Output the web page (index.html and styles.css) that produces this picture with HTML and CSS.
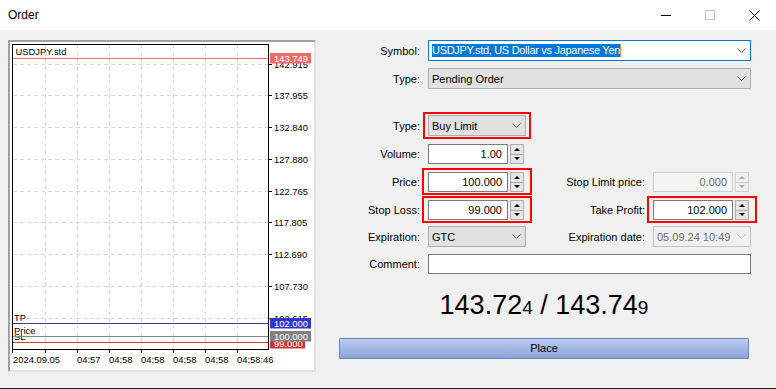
FILE: index.html
```html
<!DOCTYPE html>
<html>
<head>
  <meta charset="UTF-8">
  <title>Order</title>
  <link rel="stylesheet" href="styles.css">
</head>
<body>
  <div class="window">
    <div class="titlebar">
      <div class="title">Order</div>
      <div class="ctl">
        <svg width="10" height="10" viewBox="0 0 10 10"><line x1="0" y1="5.5" x2="10" y2="5.5" stroke="#000"/></svg>
      </div>
      <div class="ctl">
        <svg width="10" height="10" viewBox="0 0 10 10"><rect x="0.5" y="0.5" width="9" height="9" fill="none" stroke="#c6c6c6"/></svg>
      </div>
      <div class="ctl">
        <svg width="11" height="11" viewBox="0 0 11 11"><path d="M0.5 0.5 L10.5 10.5 M10.5 0.5 L0.5 10.5" stroke="#000" fill="none"/></svg>
      </div>
    </div>

    <div class="main">
      <div class="chart">
        <svg width="304" height="328" viewBox="10 42 304 328">
          <g class="grid">
            <line x1="13" y1="64.5" x2="268" y2="64.5"/>
            <line x1="13" y1="95.5" x2="268" y2="95.5"/>
            <line x1="13" y1="127.5" x2="268" y2="127.5"/>
            <line x1="13" y1="159.5" x2="268" y2="159.5"/>
            <line x1="13" y1="191.5" x2="268" y2="191.5"/>
            <line x1="13" y1="222.5" x2="268" y2="222.5"/>
            <line x1="13" y1="254.5" x2="268" y2="254.5"/>
            <line x1="13" y1="286.5" x2="268" y2="286.5"/>
            <line x1="13" y1="318.5" x2="268" y2="318.5"/>
            <line x1="45.5" y1="45" x2="45.5" y2="349"/>
            <line x1="77.5" y1="45" x2="77.5" y2="349"/>
            <line x1="109.5" y1="45" x2="109.5" y2="349"/>
            <line x1="141.5" y1="45" x2="141.5" y2="349"/>
            <line x1="173.5" y1="45" x2="173.5" y2="349"/>
            <line x1="205.5" y1="45" x2="205.5" y2="349"/>
            <line x1="237.5" y1="45" x2="237.5" y2="349"/>
          </g>

          <g class="ticks">
            <line x1="269" y1="64.5" x2="272" y2="64.5"/>
            <line x1="269" y1="95.5" x2="272" y2="95.5"/>
            <line x1="269" y1="127.5" x2="272" y2="127.5"/>
            <line x1="269" y1="159.5" x2="272" y2="159.5"/>
            <line x1="269" y1="191.5" x2="272" y2="191.5"/>
            <line x1="269" y1="222.5" x2="272" y2="222.5"/>
            <line x1="269" y1="254.5" x2="272" y2="254.5"/>
            <line x1="269" y1="286.5" x2="272" y2="286.5"/>
            <line x1="269" y1="318.5" x2="272" y2="318.5"/>
            <line x1="12.5" y1="350" x2="12.5" y2="353"/>
            <line x1="45.5" y1="350" x2="45.5" y2="353"/>
            <line x1="77.5" y1="350" x2="77.5" y2="353"/>
            <line x1="109.5" y1="350" x2="109.5" y2="353"/>
            <line x1="141.5" y1="350" x2="141.5" y2="353"/>
            <line x1="173.5" y1="350" x2="173.5" y2="353"/>
            <line x1="205.5" y1="350" x2="205.5" y2="353"/>
            <line x1="237.5" y1="350" x2="237.5" y2="353"/>
          </g>

          <g class="axis">
            <text x="274" y="67.8">142.915</text>
            <text x="274" y="98.8">137.955</text>
            <text x="274" y="130.8">132.840</text>
            <text x="274" y="162.8">127.880</text>
            <text x="274" y="194.8">122.765</text>
            <text x="274" y="225.8">117.805</text>
            <text x="274" y="257.8">112.690</text>
            <text x="274" y="289.8">107.730</text>
            <text x="274" y="321.8">102.615</text>
            <text x="13" y="363">2024.09.05</text>
            <text x="77" y="363">04:57</text>
            <text x="109" y="363">04:58</text>
            <text x="141" y="363">04:58</text>
            <text x="173" y="363">04:58</text>
            <text x="205" y="363">04:58</text>
            <text x="237" y="363">04:58:46</text>
            <text x="15.5" y="55">USDJPY.std</text>
            <text x="14" y="321">TP</text>
            <text x="14" y="340">SL</text>
            <text x="14" y="334">Price</text>
          </g>

          <line x1="13" y1="58.5" x2="268" y2="58.5" stroke="#ee6a6a"/>
          <line x1="13" y1="323.5" x2="268" y2="323.5" stroke="#3a3a9e"/>
          <line x1="13" y1="336.5" x2="268" y2="336.5" stroke="#858585"/>
          <line x1="13" y1="342.5" x2="268" y2="342.5" stroke="#d33a3a"/>

          <rect x="12.5" y="44.5" width="256" height="305" fill="none" stroke="#000"/>

          <g class="tags">
            <rect x="270" y="53" width="41" height="10.5" fill="#f06a6a"/>
            <text x="274" y="61.7">143.749</text>
            <rect x="270" y="318" width="41" height="10.5" fill="#3434c6"/>
            <text x="274" y="326.6">102.000</text>
            <rect x="270" y="338" width="35" height="10.5" fill="#cc3434"/>
            <text x="274" y="346.8">99.000</text>
            <rect x="270" y="331" width="41" height="10.5" fill="#808080"/>
            <text x="274" y="339.6">100.000</text>
          </g>
        </svg>
      </div>

      <div class="form">
        <div class="row tall">
          <label>Symbol:</label>
          <div class="combo focus span3">
            <span class="sel">USDJPY.std, US Dollar vs Japanese Yen</span>
            <svg class="chev" width="9" height="5" viewBox="0 0 9 5"><polyline points="0.5,0.5 4.5,4.5 8.5,0.5"/></svg>
          </div>
        </div>

        <div class="row tall mt7">
          <label>Type:</label>
          <div class="combo span3">
            <span>Pending Order</span>
            <svg class="chev" width="9" height="5" viewBox="0 0 9 5"><polyline points="0.5,0.5 4.5,4.5 8.5,0.5"/></svg>
          </div>
        </div>

        <div class="row tall mt26">
          <label>Type:</label>
          <div class="combo hl">
            <span>Buy Limit</span>
            <svg class="chev" width="9" height="5" viewBox="0 0 9 5"><polyline points="0.5,0.5 4.5,4.5 8.5,0.5"/></svg>
          </div>
        </div>

        <div class="row mt8">
          <label>Volume:</label>
          <div class="field">
            <div class="input">1.00</div>
            <div class="spin"><i class="up"></i><i class="dn"></i></div>
          </div>
        </div>

        <div class="row mt8">
          <label>Price:</label>
          <div class="field hl hl-in">
            <div class="input">100.000</div>
            <div class="spin"><i class="up"></i><i class="dn"></i></div>
          </div>
          <label>Stop Limit price:</label>
          <div class="field off">
            <div class="input">0.000</div>
            <div class="spin"><i class="up"></i><i class="dn"></i></div>
          </div>
        </div>

        <div class="row mt8">
          <label>Stop Loss:</label>
          <div class="field hl hl-in">
            <div class="input">99.000</div>
            <div class="spin"><i class="up"></i><i class="dn"></i></div>
          </div>
          <label>Take Profit:</label>
          <div class="field hl hl-in">
            <div class="input">102.000</div>
            <div class="spin"><i class="up"></i><i class="dn"></i></div>
          </div>
        </div>

        <div class="row tall mt6">
          <label>Expiration:</label>
          <div class="combo">
            <span>GTC</span>
            <svg class="chev" width="9" height="5" viewBox="0 0 9 5"><polyline points="0.5,0.5 4.5,4.5 8.5,0.5"/></svg>
          </div>
          <label>Expiration date:</label>
          <div class="combo off">
            <span>05.09.24 10:49</span>
            <svg class="chev" width="9" height="5" viewBox="0 0 9 5"><polyline points="0.5,0.5 4.5,4.5 8.5,0.5"/></svg>
          </div>
        </div>

        <div class="row mt7">
          <label>Comment:</label>
          <div class="input span3"></div>
        </div>

        <div class="quote">143.72<small>4</small> / 143.74<small>9</small></div>

        <div class="place">Place</div>
      </div>
    </div>
  </div>
</body>
</html>
```

FILE: styles.css
```css
body {
  margin: 0;
  background: #1e1e1e;
  font: 11px "Liberation Sans", Arial, sans-serif;
  color: #000;
}
.window {
  width: 776px;
  height: 388px;
  background: #f0f0f0;
  overflow: hidden;
}

/* title bar */
.titlebar {
  height: 30px;
  background: #fff;
  display: flex;
  align-items: center;
}
.title {
  flex: 1;
  padding-left: 8px;
  font-size: 12px;
}
.ctl {
  width: 44px;
  height: 30px;
  display: flex;
  align-items: center;
  justify-content: center;
}
.ctl svg {
  display: block;
}

.main {
  display: flex;
  padding: 10px 0 0 8px;
}

/* chart */
.chart {
  width: 304px;
  height: 328px;
  border: 2px solid;
  border-color: #a0a0a0 #e3e3e3 #e3e3e3 #a0a0a0;
  background: #fff;
}
.chart svg {
  display: block;
}
.grid line {
  stroke: #d9d9d9;
  stroke-dasharray: 4 3;
}
.ticks line {
  stroke: #000;
}
.chart text {
  font: 9.4px "Liberation Sans", Arial, sans-serif;
  fill: #000;
}
.tags text {
  fill: #fff;
}

/* form */
.form {
  margin-left: 14px;
  width: 421px;
}
.row {
  display: grid;
  grid-template-columns: 90px 98px 111px 98px;
  column-gap: 8px;
  align-items: center;
  height: 20px;
}
.row.tall {
  height: 21px;
}
.mt6 { margin-top: 6px; }
.mt7 { margin-top: 7px; }
.mt8 { margin-top: 8px; }
.mt26 { margin-top: 26px; }
.row label {
  text-align: right;
  white-space: nowrap;
}
.span3 {
  grid-column: 2 / 5;
}

.combo {
  position: relative;
  height: 21px;
  box-sizing: border-box;
  border: 1px solid #adadad;
  background: #e1e1e1;
  display: flex;
  align-items: center;
  justify-content: space-between;
  padding: 0 4px 0 3px;
}
.combo.focus {
  border-color: #0078d7;
  background: #fff;
}
.combo .sel {
  background: #0078d7;
  color: #fff;
  line-height: 13px;
  letter-spacing: -0.3px;
  border-right: 1px solid #f08a24;
}
.chev polyline {
  fill: none;
  stroke: #505050;
}
.combo.off {
  background: #f0f0f0;
  border-color: #c4c4c4;
  color: #6d6d6d;
}
.combo.off .chev polyline {
  stroke: #c0c0c0;
}

.field {
  position: relative;
  display: flex;
  height: 20px;
}
.input {
  height: 20px;
  box-sizing: border-box;
  border: 1px solid #7a7a7a;
  background: #fff;
  line-height: 18px;
  text-align: right;
  padding-right: 5px;
}
.field .input {
  width: 80px;
}
.spin {
  width: 14px;
  height: 20px;
  margin-left: 2px;
  box-sizing: border-box;
  border: 1px solid #adadad;
  background: #e5e5e5;
  display: flex;
  flex-direction: column;
}
.spin i {
  flex: 1;
  display: flex;
  align-items: center;
  justify-content: center;
}
.spin i + i {
  border-top: 1px solid #adadad;
}
.spin i::before {
  content: "";
  border-left: 3px solid transparent;
  border-right: 3px solid transparent;
}
.spin .up::before {
  border-bottom: 3px solid #000;
}
.spin .dn::before {
  border-top: 3px solid #000;
}
.field.off .input {
  background: #f4f4f4;
  border-color: #cccccc;
  color: #6d6d6d;
}
.field.off .spin {
  border-color: #d0d0d0;
  background: #f0f0f0;
}
.field.off .spin i + i {
  border-top-color: #d0d0d0;
}
.field.off .spin .up::before {
  border-bottom-color: #a6a6a6;
}
.field.off .spin .dn::before {
  border-top-color: #a6a6a6;
}

/* red marks over the controls */
.hl::after {
  content: "";
  position: absolute;
  left: -6px;
  right: -6px;
  top: -4px;
  bottom: -4px;
  border: 2px solid #ff0000;
  pointer-events: none;
}
.field.hl {
  width: 98px;
}
.hl-in::after {
  bottom: -3px;
}

.quote {
  margin: 15px 0 0 9px;
  width: 410px;
  text-align: center;
  font-size: 27px;
  line-height: 32px;
}
.quote small {
  font-size: 19px;
}

.place {
  margin: 14px 0 0 9px;
  width: 410px;
  height: 21px;
  box-sizing: border-box;
  border: 1px solid #7186b8;
  border-radius: 1px;
  background: linear-gradient(#b9cdf2, #8ca2d6);
  line-height: 19px;
  text-align: center;
}
```
